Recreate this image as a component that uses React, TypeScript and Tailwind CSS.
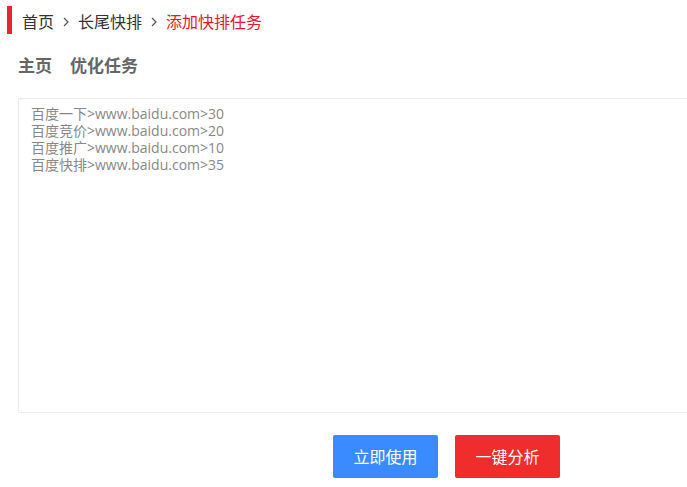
import React from "react";

const lines = [
  "百度一下>www.baidu.com>30",
  "百度竞价>www.baidu.com>20",
  "百度推广>www.baidu.com>10",
  "百度快排>www.baidu.com>35",
];

function Chevron() {
  return (
    <svg width="8" height="12" viewBox="0 0 8 12" className="mx-[8px]">
      <polyline points="2,2 6,6 2,10" fill="none" stroke="#555" strokeWidth="1.2" />
    </svg>
  );
}

export default function App() {
  return (
    <div
      className="w-[687px] h-[487px] overflow-hidden bg-white"
      style={{ fontFamily: '"Open Sans", "Noto Sans CJK SC", sans-serif' }}
    >
      <div className="flex items-start h-[28px] mt-[6px] ml-[7px]">
        <div className="w-[5px] h-[28px] bg-[#e8262d]" />
        <div className="flex items-center ml-[10px] mt-[4px] h-[24px] text-[16px] text-[#333]">
          <span>首页</span>
          <Chevron />
          <span>长尾快排</span>
          <Chevron />
          <span className="text-[#e6162d]">添加快排任务</span>
        </div>
      </div>

      <div className="flex mt-[20px] ml-[18px] text-[17px] font-bold text-[#666] leading-[24px]">
        <span>主页</span>
        <span className="ml-[18px]">优化任务</span>
      </div>

      <div className="mt-[20px] ml-[18px] w-[690px] h-[315px] border border-[#ebebeb] rounded-[2px] pl-[12px] pt-[6px] text-[14px] leading-[17px] text-[#888]">
        {lines.map((l) => (
          <div key={l}>{l}</div>
        ))}
      </div>

      <div className="flex gap-[17px] mt-[22px] ml-[333px]">
        <button className="w-[105px] h-[43px] rounded-[2px] bg-[#3a8bff] text-white text-[16px]">
          立即使用
        </button>
        <button className="w-[105px] h-[43px] rounded-[2px] bg-[#ef2d2d] text-white text-[16px]">
          一键分析
        </button>
      </div>
    </div>
  );
}
